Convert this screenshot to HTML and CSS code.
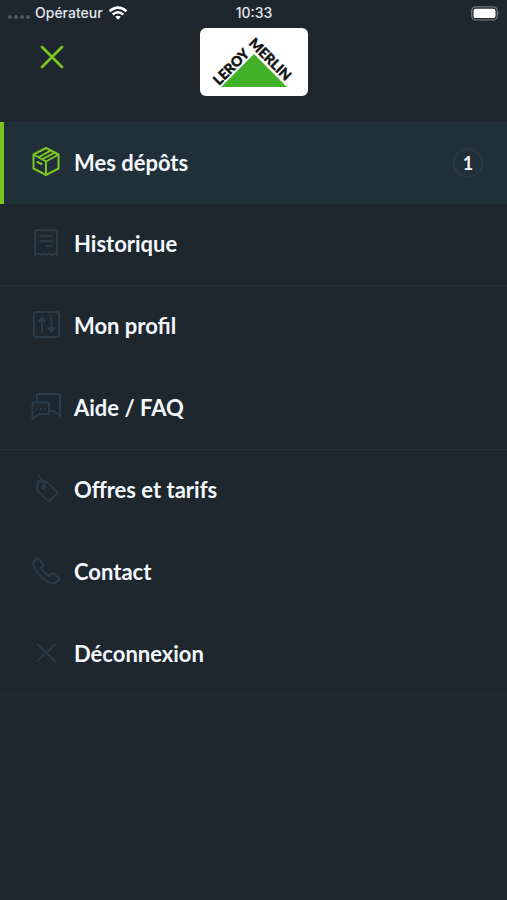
FILE: index.html
```html
<!DOCTYPE html>
<html lang="fr">
<head>
<meta charset="utf-8">
<meta name="viewport" content="width=device-width, initial-scale=1">
<title>Menu</title>
<link rel="stylesheet" href="styles.css">
</head>
<body>
<div class="status">
  <div class="carrier">
    <span class="signal"><i></i><i></i><i></i><i></i></span>
    <span>Opérateur</span>
    <svg class="wifi" width="20" height="14" viewBox="0 0 20 14" fill="none" stroke="currentColor" stroke-width="2.6" aria-hidden="true">
      <path d="M1.5 5.2Q10-2 18.500 5.200"/><path d="M4.700 8.500Q10 4 15.300 8.500"/><path d="M10 13.800 7.200 10.700Q10 8.700 12.800 10.700Z" fill="currentColor" stroke="none"/>
    </svg>
  </div>
  <time>10:33</time>
  <svg class="battery" width="29" height="15" viewBox="0 0 29 15" aria-hidden="true">
    <rect x="0.700" y="0.900" width="25.600" height="13" rx="4" fill="none" stroke="#6d747a" stroke-width="1.300"/>
    <rect x="2.500" y="2.700" width="22" height="9.400" rx="2.200" fill="#fff"/>
    <path d="M27.500 5.200q1.500 2.200 0 4.400z" fill="#6d747a"/>
  </svg>
</div>
<header class="top">
  <button class="close" type="button" aria-label="Fermer">
    <svg width="24" height="24" viewBox="0 0 24 24" fill="none" stroke="currentColor" stroke-width="2.800" stroke-linecap="round"><path d="M2 2 22 22M22 2 2 22"/></svg>
  </button>
  <div class="brand">
    <svg width="108" height="68" viewBox="0 0 108 68" role="img" aria-label="Leroy Merlin">
      <path d="M54 26 87 59H21Z" fill="#43b02a"/>
      <text class="brand-text" transform="translate(19 58) rotate(-45)">LEROY</text>
      <text class="brand-text" transform="translate(48 16) rotate(45)">MERLIN</text>
    </svg>
  </div>
</header>
<nav class="menu" aria-label="Menu principal">
  <a class="item active" href="#depots" aria-current="page">
    <svg class="icon" viewBox="0 0 30 30"><path d="M15 2 27.500 8.500V22.500L15 29 2.500 22.500V8.500ZM2.500 8.500 15 15.500 27.500 8.500M15 15.500V29M7.500 11.300 19.500 4.600M11 13.300 23.500 6.600M6.500 16 10.500 18"/></svg>
    <span>Mes dépôts</span><span class="badge">1</span>
  </a>
  <a class="item ruled" href="#historique">
    <svg class="icon" viewBox="0 0 30 30"><path d="M4 27V4Q4 2 6 2H24Q26 2 26 4V27L23.300 25.500 20.500 27 17.700 25.500 15 27 12.300 25.500 9.500 27 6.700 25.500ZM9 8H21M9 13H21M15.500 18H21"/></svg>
    <span>Historique</span>
  </a>
  <a class="item" href="#profil">
    <svg class="icon" viewBox="0 0 30 30"><rect x="3" y="2" width="25" height="25" rx="1.500"/><path d="M11 22V7M20.500 7V22M8 11 11 7.500 14 11ZM17.500 18 20.500 21.500 23.500 18Z"/></svg>
    <span>Mon profil</span>
  </a>
  <a class="item ruled" href="#aide">
    <svg class="icon chat" viewBox="0 0 30 30"><path d="M6 10V4Q6 2 8 2H27Q29 2 29 4V24L23 19H18M3 10.500H16Q18 10.500 18 12.500V20Q18 22 16 22H8L1.500 27V12Q1.500 10.500 3 10.500Z"/><path class="dots" d="M5.500 17H5.600M9.700 17H9.800M14 17H14.100"/></svg>
    <span>Aide / FAQ</span>
  </a>
  <a class="item faint" href="#offres">
    <svg class="icon" viewBox="0 0 30 30"><path d="M6.500 7.500H15L27 18.500 18 27.500 6.500 17ZM7 1.500 12 6.500Q14.500 9 13.500 12"/><circle cx="12.500" cy="13" r="1.600"/></svg>
    <span>Offres et tarifs</span>
  </a>
  <a class="item faint" href="#contact">
    <svg class="icon" viewBox="0 0 30 30"><path d="M3 5.500 6 2.500Q7 1.800 8 2.800L12 8Q12.700 9.200 11.700 10.200L10 12Q12.500 17 18.500 20L20.500 17.700Q21.500 17 22.500 17.700L27.500 21.500Q28.700 22.500 27.700 23.500L25 26.500Q22 29.200 15 24.500 7.500 19.500 4 12.500 1.200 8 3 5.500Z"/></svg>
    <span>Contact</span>
  </a>
  <a class="item faint" href="#deconnexion">
    <svg class="icon" viewBox="0 0 30 30"><path d="M6.500 6.500 24 23M24 6.500 6.500 23"/></svg>
    <span>Déconnexion</span>
  </a>
</nav>
</body>
</html>
```
FILE: styles.css
```css
* { box-sizing: border-box; }
body {
  margin: 0;
  min-height: 100vh;
  background: #1e272e;
  color: #f3f8fd;
  font-family: Lato, "Liberation Sans", sans-serif;
}
.status {
  display: grid;
  grid-template-columns: 1fr auto 1fr;
  align-items: center;
  height: 26px;
  padding: 0 7px 0 8px;
  font: 500 14px/26px Inter, sans-serif;
  color: #e4e8ec;
}
.carrier { display: flex; align-items: center; gap: 5px; }
.signal { display: flex; gap: 2px; padding-top: 8px; }
.signal i { width: 4px; height: 4px; border-radius: 50%; background: #515a61; }
.wifi { color: #fff; }
.battery { justify-self: end; }
.top {
  display: grid;
  grid-template-columns: 1fr auto 1fr;
  align-items: start;
  height: 96px;
  padding-top: 2px;
}
.close {
  display: flex;
  justify-self: start;
  margin: 11px 0 0 34px;
  padding: 6px;
  border: 0;
  background: none;
  color: #7bc523;
  cursor: pointer;
}
.brand { border-radius: 6px; background: #fff; }
.brand svg { display: block; }
.brand-text {
  font: 900 14px Lato, sans-serif;
  fill: #111;
  stroke: #111;
  stroke-width: 0.4px;
}
.item {
  display: flex;
  align-items: center;
  gap: 13px;
  height: 82px;
  padding: 0 24px 2px 31px;
  border-bottom: 1px solid transparent;
  color: inherit;
  font-size: 22px;
  font-weight: 700;
  text-decoration: none;
}
.ruled { border-bottom-color: #25323a; }
.faint { border-bottom-color: #202b32; }
.active {
  background: #212f38;
  border-bottom: 0;
  box-shadow: inset 4px 0 #7bc523;
}
.icon {
  width: 30px;
  height: 30px;
  margin-bottom: 2px;
  fill: none;
  stroke: #2a3b47;
  stroke-width: 2;
  stroke-linejoin: round;
  stroke-linecap: round;
}
.chat { stroke: #293d4e; }
.active .icon { stroke: #7bc523; }
.badge {
  display: grid;
  place-items: center;
  width: 30px;
  height: 30px;
  margin: 2px 0 0 auto;
  border: 2px solid #2b3841;
  border-radius: 50%;
  font-size: 18px;
}
```
